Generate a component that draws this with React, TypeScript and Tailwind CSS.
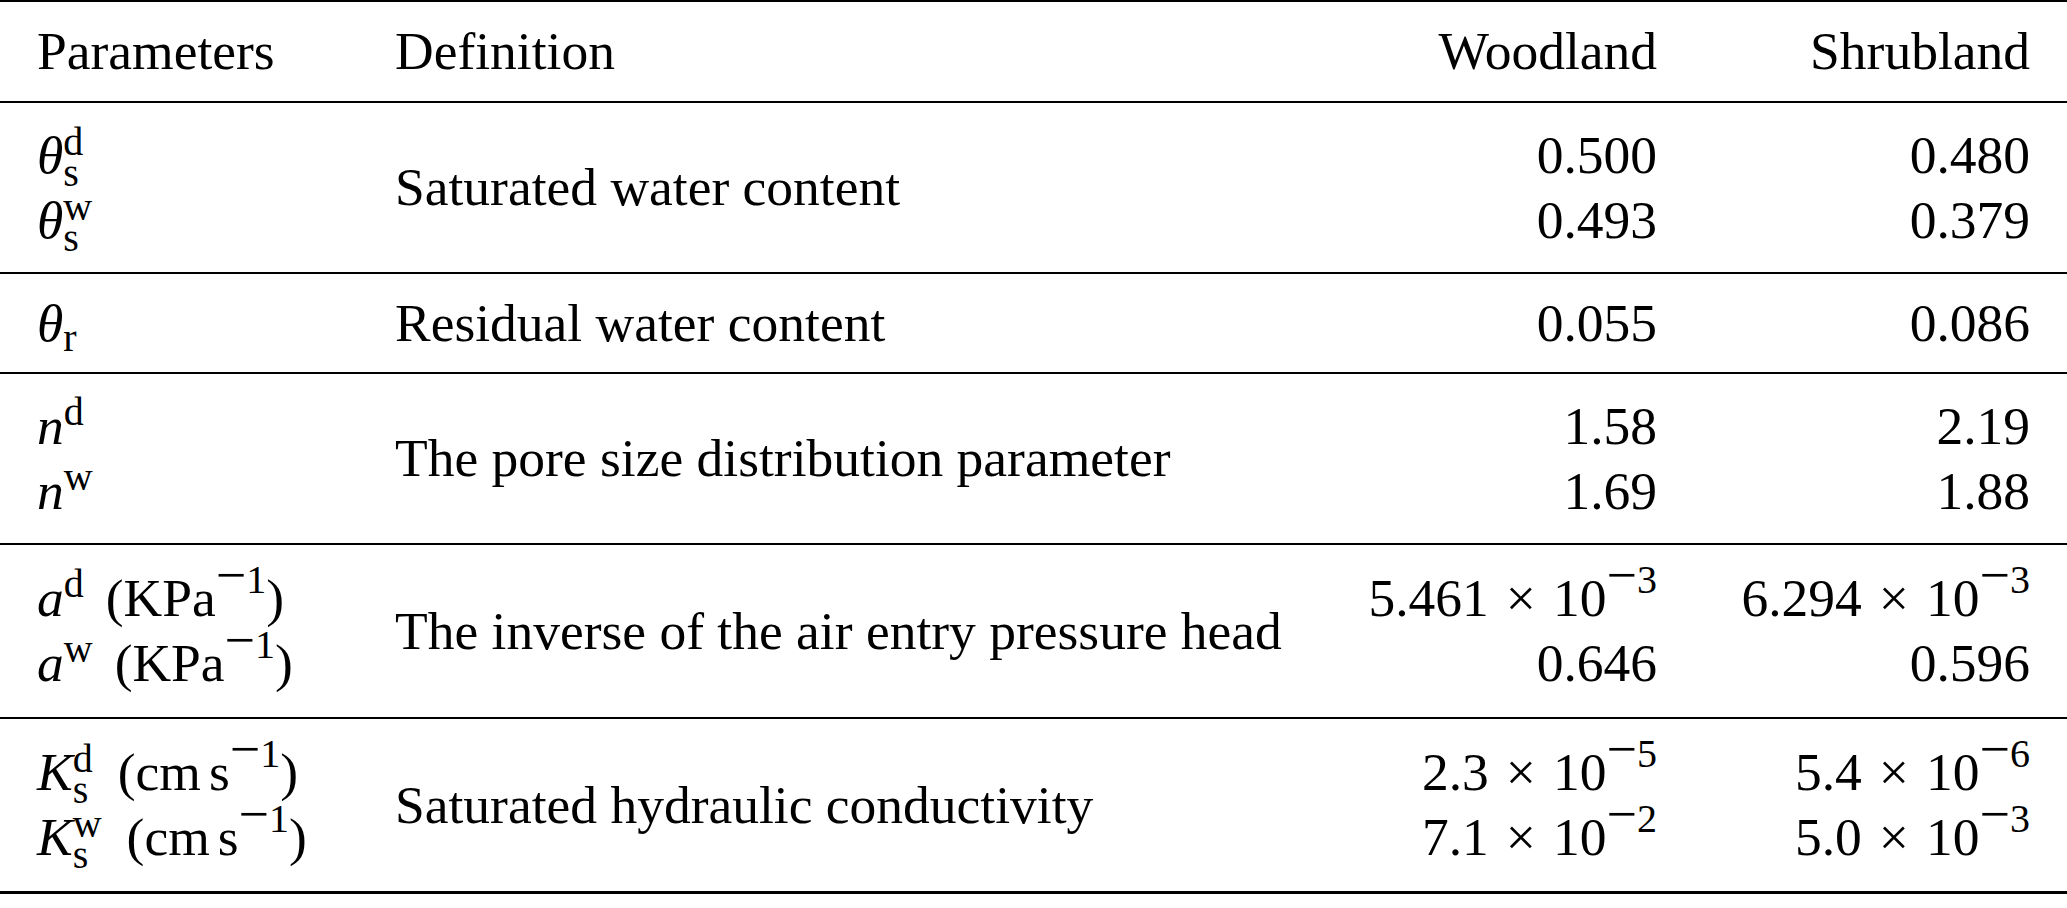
import type { ReactNode } from 'react';

// stacked super/subscript, e.g. θ with s below and d above
function Scripts({ sup, sub }: { sup: string; sub: string }) {
  return (
    <span className="inline-flex flex-col align-[18px] text-[40px] not-italic">
      <span className="leading-[32px]">{sup}</span>
      <span className="leading-[30px]">{sub}</span>
    </span>
  );
}

function Sup({ children }: { children: ReactNode }) {
  return <span className="align-[19px] text-[40px] leading-[30px]">{children}</span>;
}

// superscript with a negative exponent: −1, −3 ...
function Neg({ n }: { n: string }) {
  return (
    <span className="align-[23px] text-[40px] leading-[24px]">
      <span className="text-[54px] leading-[16px]">−</span>
      {n}
    </span>
  );
}

function Sci({ m, e }: { m: string; e: string }) {
  return (
    <>
      {m}
      <span className="mx-[17px]">×</span>
      10
      <Neg n={e} />
    </>
  );
}

function Lines({ items, right }: { items: ReactNode[]; right?: boolean }) {
  return (
    <div className={right ? 'text-right' : 'text-left'}>
      {items.map((item, i) => (
        <div key={i} className="h-[65px] leading-[65px] whitespace-nowrap">
          {item}
        </div>
      ))}
    </div>
  );
}

const rows = [
  {
    h: 'h-[171px]',
    params: [
      <><i>θ</i><Scripts sup="d" sub="s" /></>,
      <><i>θ</i><Scripts sup="w" sub="s" /></>,
    ],
    def: 'Saturated water content',
    wood: ['0.500', '0.493'],
    shrub: ['0.480', '0.379'],
  },
  {
    h: 'h-[100px]',
    params: [<><i>θ</i><span className="align-[-10px] text-[40px] leading-[24px]">r</span></>],
    def: 'Residual water content',
    wood: ['0.055'],
    shrub: ['0.086'],
  },
  {
    h: 'h-[171px]',
    params: [
      <><i>n</i><Sup>d</Sup></>,
      <><i>n</i><Sup>w</Sup></>,
    ],
    def: 'The pore size distribution parameter',
    wood: ['1.58', '1.69'],
    shrub: ['2.19', '1.88'],
  },
  {
    h: 'h-[174px]',
    params: [
      <><i>a</i><Sup>d</Sup><span className="ml-[22px]">(KPa<Neg n="1" />)</span></>,
      <><i>a</i><Sup>w</Sup><span className="ml-[22px]">(KPa<Neg n="1" />)</span></>,
    ],
    def: 'The inverse of the air entry pressure head',
    wood: [<Sci m="5.461" e="3" />, '0.646'],
    shrub: [<Sci m="6.294" e="3" />, '0.596'],
  },
  {
    h: 'h-[175px]',
    params: [
      <><i>K</i><Scripts sup="d" sub="s" /><span className="ml-[25px]">(cm<span className="ml-[8px]">s</span><Neg n="1" />)</span></>,
      <><i>K</i><Scripts sup="w" sub="s" /><span className="ml-[25px]">(cm<span className="ml-[8px]">s</span><Neg n="1" />)</span></>,
    ],
    def: 'Saturated hydraulic conductivity',
    wood: [<Sci m="2.3" e="5" />, <Sci m="7.1" e="2" />],
    shrub: [<Sci m="5.4" e="6" />, <Sci m="5.0" e="3" />],
  },
];

const GRID = 'grid grid-cols-[358px_905px_357px_373px] items-center px-[37px]';

export default function App() {
  return (
    <div className="min-h-screen bg-white text-black font-['Liberation_Serif','Times_New_Roman',serif] text-[53.5px]">
      <div className="border-t-2 border-black">
        <div className={`${GRID} h-[101px] border-b-2 border-black`}>
          <Lines items={['Parameters']} />
          <Lines items={['Definition']} />
          <Lines items={['Woodland']} right />
          <Lines items={['Shrubland']} right />
        </div>
        {rows.map((row, i) => (
          <div
            key={i}
            className={`${GRID} ${row.h} border-black ${i === rows.length - 1 ? 'border-b-[3px]' : 'border-b-2'}`}
          >
            <Lines items={row.params} />
            <Lines items={[row.def]} />
            <Lines items={row.wood} right />
            <Lines items={row.shrub} right />
          </div>
        ))}
      </div>
    </div>
  );
}
